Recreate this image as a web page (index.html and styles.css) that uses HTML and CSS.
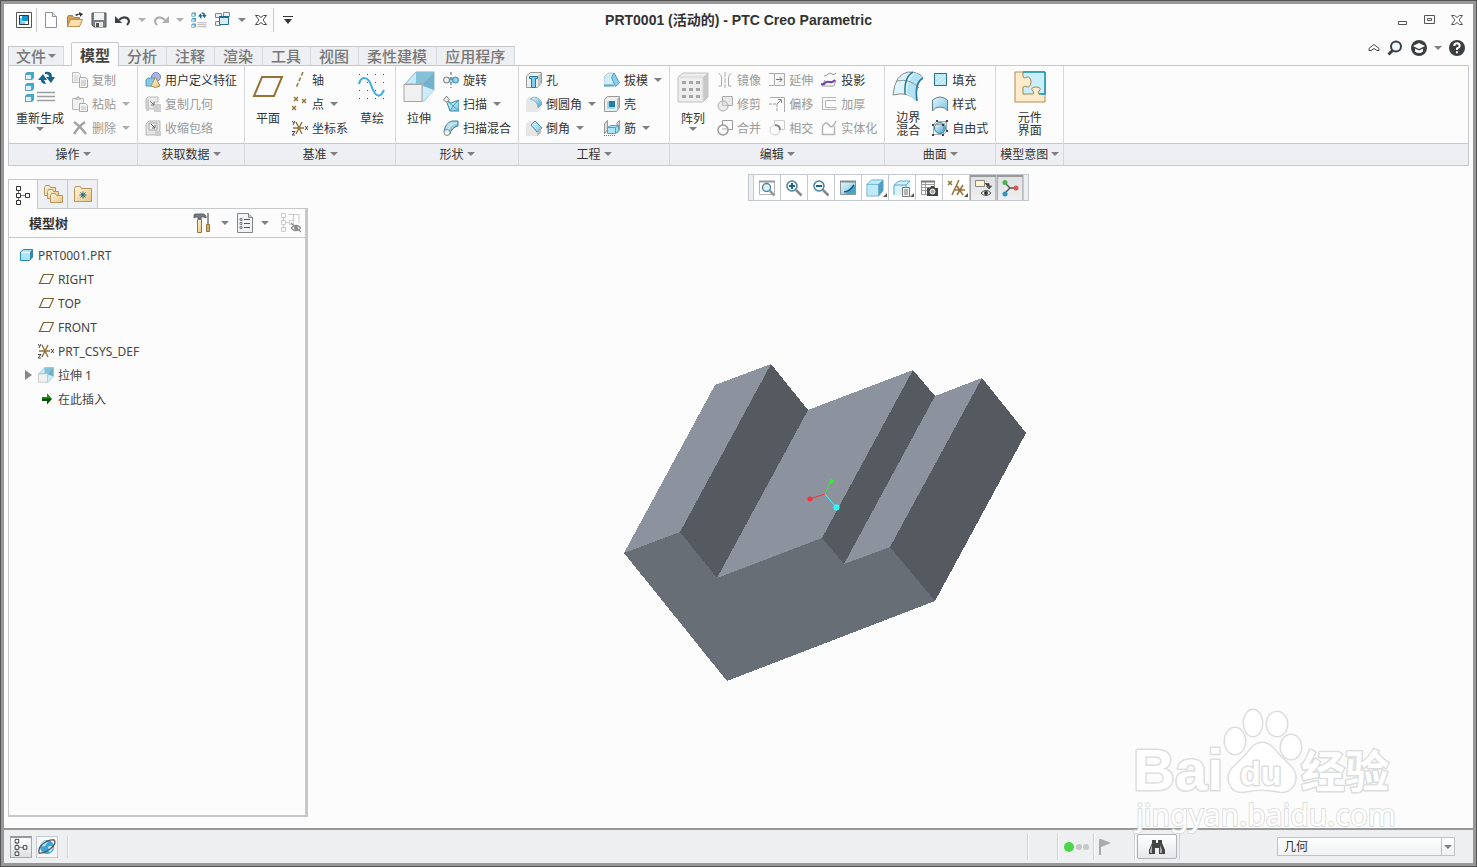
FILE: index.html
```html
<!DOCTYPE html>
<html lang="zh-CN">
<head>
    <meta charset="UTF-8">
    <meta name="viewport" content="width=device-width, initial-scale=1.0">
    <title>PRT0001 (活动的) - PTC Creo Parametric</title>
    <link rel="stylesheet" href="styles.css">
</head>
<body>
    <!-- Shared icons -->
    <svg class="defs" width="0" height="0" aria-hidden="true">
        <defs>
            <linearGradient id="blue" x1="0" y1="0" x2="1" y2="1">
                <stop offset="0" stop-color="#e4f6fd"/>
                <stop offset="1" stop-color="#7cc4e2"/>
            </linearGradient>
            <linearGradient id="tan" x1="0" y1="0" x2="1" y2="1">
                <stop offset="0" stop-color="#fff6df"/>
                <stop offset="1" stop-color="#e8c583"/>
            </linearGradient>
            <linearGradient id="sky" x1="0" y1="0" x2="1" y2="1">
                <stop offset="0" stop-color="#ffffff"/>
                <stop offset="1" stop-color="#3f9cc4"/>
            </linearGradient>
            <symbol id="csys" viewBox="0 0 16 16">
                <path d="M1 8h11M4 2l6 12M10 2L4 14" fill="none" stroke="#957238" stroke-width="1.4"/>
                <path d="M0 1l1.5 2M3 1L1 5M0 11.500h3L0 15h3M13 6l3 4M16 6l-3 4" fill="none" stroke="#444"/>
            </symbol>
            <symbol id="extrude" viewBox="0 0 32 32">
                <path d="M2 13L13 1h18L20 13z" fill="#c3ebf9" stroke="#8fb4c4"/>
                <path d="M13 1h18L20 13h-7z" fill="#85c0d9"/>
                <path d="M31 1v18L20 31V13z" fill="#74b0ca" stroke="#8fb4c4"/>
                <path d="M20 31l11-12-11-4z" fill="#c9eefa"/>
                <path d="M1 13.500h18v17H1z" fill="#f0f0f2" stroke="#a5a5a5"/>
            </symbol>
            <symbol id="tree" viewBox="0 0 16 20">
                <path d="M3.500 5v10M5 10.500h6" fill="none" stroke="#777"/>
                <path d="M1.500 1.500h4v4h-4zM1.500 8.500h4v4h-4zM1.500 15.500h4v4h-4zM10.500 8.500h4v4h-4z" fill="#fff" stroke="#333"/>
            </symbol>
            <symbol id="plane" viewBox="0 0 16 16">
                <path d="M5.500 3.500h10l-4 9h-10z" fill="none" stroke="#7d6232" stroke-width="1.200"/>
            </symbol>
            <symbol id="regen" viewBox="0 0 32 32">
                <path d="M1 3l2-2h7v6l-2 2H1zM1 14l2-2h7v6l-2 2H1zM1 25l2-2h7v6l-2 2H1z" fill="#3ea7cf"/>
                <path d="M1.500 3.500h6v5h-6zM1.500 14.500h6v5h-6zM1.500 25.500h6v5h-6z" fill="#d8f3fc" stroke="#5d8fa5" stroke-width=".7"/>
                <path d="M13 21.500h18M13 25.500h18M13 29.500h18" stroke="#9d9d9d" stroke-width="1.500"/>
                <path d="M14 9l5-6 4 6h-3l2 4q-5 0-5-4zM21 1q7-1 7 5h3l-4 6-5-6h3q0-3-4-3z" fill="#17658a"/>
            </symbol>
            <symbol id="cube" viewBox="0 0 20 20">
                <path d="M1 6l5-5h13v12l-5 6H1z" fill="#bdebfa"/>
                <path d="M14 6l5-5v12l-5 6z" fill="#4d9fc3"/>
                <path d="M1 6h13v13H1zM1 6l5-5h13l-5 5M19 1v12l-5 6" fill="none" stroke="#5b9dba" stroke-width=".8"/>
            </symbol>
        </defs>
    </svg>

    <div class="window">
        <header class="titlebar">
            <div class="quick">
                <button class="app" aria-label="窗口"><svg width="16" height="16"><path d="M.5.500h15v15H.5z" fill="#fff" stroke="#555"/><path d="M3.500 3.500h9v9h-9z" fill="#fff" stroke="#333"/><path d="M6 4h6v5H6z" fill="#1297d8"/><path d="M4 6h2v6H4zM4 10h5v2H4z" fill="#7cc8ea"/></svg></button>
                <span class="sep"></span>
                <button class="tool" aria-label="新建"><svg width="16" height="16"><path d="M2.500.500h7l4 4v11h-11z" fill="#fff" stroke="#8b9196"/><path d="M9.500.500v4h4" fill="#dde2e6" stroke="#8b9196"/></svg></button>
                <button class="tool" aria-label="打开"><svg width="16" height="16"><path d="M.5 14.500v-10l1-1h4l1 2h6v9z" fill="#d0a35c" stroke="#a8803f"/><path d="M.5 14.500l3-7h12l-3 7z" fill="#fbe0ac" stroke="#b78e4b"/><path d="M8 3q2-2 4-1V0l4 2-3 3V3q-2-1-3 1z" fill="#333"/></svg></button>
                <button class="tool" aria-label="保存"><svg width="16" height="16"><path d="M1 1h14v14H3l-2-2z" fill="#7b7f84" stroke="#555"/><path d="M3 1h10v7H3z" fill="#f1f3f4"/><path d="M4 10h8v5H4z" fill="#e7e7e7"/><path d="M5 11h3v4H5z" fill="#555"/></svg></button>
                <button class="tool" aria-label="撤消"><svg width="16" height="16"><path d="M4 8q4-4 8-2 4 3 0 7" fill="none" stroke="#3b4045" stroke-width="2.200"/><path d="M0 4v7h7z" fill="#3b4045"/></svg></button>
                <button class="drop" aria-label="撤消列表"><span class="arrow pale"></span></button>
                <button class="tool" aria-label="重做"><svg width="16" height="16"><path d="M12 8Q8 4 4 6q-4 3 0 7" fill="none" stroke="#adb0b2" stroke-width="2.200"/><path d="M16 4v7H9z" fill="#adb0b2"/></svg></button>
                <button class="drop" aria-label="重做列表"><span class="arrow pale"></span></button>
                <button class="tool" aria-label="重新生成"><svg width="16" height="16"><use href="#regen"/></svg></button>
                <button class="tool" aria-label="窗口切换"><svg width="16" height="16"><path d="M.5 1.500h6v4h-6zM8.500.500h6v4h-6zM.5 9.500h5v4h-5z" fill="#eee" stroke="#888"/><path d="M4.500 4.500h9v8h-9z" fill="#d4eefa" stroke="#246c91"/><path d="M4 5h10" stroke="#246c91" stroke-width="2"/></svg></button>
                <button class="drop" aria-label="窗口列表"><span class="arrow"></span></button>
                <button class="tool" aria-label="关闭"><svg width="12" height="12"><path d="M.5 1.500h3l2.500 2 2.500-2h3l-3.500 4.500 3.500 4.500h-3l-2.500-2-2.500 2h-3L4 6z" fill="#fff" stroke="#444"/></svg></button>
                <span class="sep"></span>
                <button class="tool" aria-label="自定义快速访问工具栏"><svg width="10" height="8"><path d="M0 .5h10" stroke="#333"/><path d="M1 3h8L5 8z" fill="#333"/></svg></button>
            </div>
            <h1>PRT0001 (活动的) - PTC Creo Parametric</h1>
            <div class="window-buttons">
                <button aria-label="最小化"><svg width="10" height="12"><path d="M.5 7.500h8v3h-8z" fill="#fff" stroke="#555"/></svg></button>
                <button aria-label="最大化"><svg width="12" height="10"><path d="M.5.500h10v8H.5zM3.500 3.500h4v2h-4z" fill="#fff" stroke="#555"/></svg></button>
                <button aria-label="关闭窗口"><svg width="12" height="12"><path d="M.5 1.500h3l2.500 2 2.500-2h3l-3.500 4.500 3.500 4.500h-3l-2.500-2-2.500 2h-3L4 6z" fill="#fff" stroke="#555"/></svg></button>
            </div>
        </header>

        <nav class="tab-row">
            <button class="tab file">文件<span class="arrow"></span></button>
            <button class="tab active">模型</button>
            <button class="tab">分析</button>
            <button class="tab">注释</button>
            <button class="tab">渲染</button>
            <button class="tab">工具</button>
            <button class="tab">视图</button>
            <button class="tab">柔性建模</button>
            <button class="tab">应用程序</button>
            <div class="help">
                <button class="collapse" aria-label="最小化功能区"><svg width="12" height="8"><path d="M1 4.500L6 .5l5 4v2H9L6 4.500l-3 2H1z" fill="#fff" stroke="#444"/></svg></button>
                <button class="tool" aria-label="搜索"><svg width="16" height="16"><circle cx="9" cy="6.500" r="5" fill="#eef7fc" stroke="#3c3f42" stroke-width="2"/><path d="M5.500 10.500L1.500 14.500" stroke="#3c3f42" stroke-width="3"/></svg></button>
                <button class="tool" aria-label="学习中心"><svg width="16" height="16"><circle cx="8" cy="8" r="8" fill="#3c3f42"/><path d="M2 6l6-3 6 3-6 3z" fill="#fff"/><path d="M4 8.500v3q4 3 8 0v-3L8 10.500z" fill="#fff"/></svg></button>
                <button class="drop" aria-label="学习列表"><span class="arrow"></span></button>
                <button class="tool" aria-label="帮助"><svg width="16" height="16"><circle cx="8" cy="8" r="8" fill="#3c3f42"/><path d="M5.300 6q0-2.700 2.700-2.700T10.700 6Q10.700 7.300 8 8.500V10M8 11.300v2" fill="none" stroke="#fff" stroke-width="2"/></svg></button>
            </div>
        </nav>

        <div class="ribbon">
            <section class="group">
                <div class="group-body">
                    <button class="big"><svg width="32" height="32"><use href="#regen"/></svg>重新生成<span class="arrow"></span></button>
                    <div class="col">
                        <button class="small" disabled><svg width="16" height="16"><path d="M.5.500h6l2 2v8h-8z" fill="#f3f3f3" stroke="#bbb"/><path d="M2 4h4M2 6h4M2 8h4" stroke="#ccc"/><path d="M7.500 5.500h6l2 2v8h-8z" fill="#f3f3f3" stroke="#aaa"/><path d="M9 9h5M9 11h5M9 13h5" stroke="#bbb"/></svg>复制</button>
                        <button class="small" disabled><svg width="16" height="16"><path d="M.5 2.500h11v11H.5z" fill="#f1f1f1" stroke="#bbb"/><path d="M3 3q0-1 2-1 1-3 2 0 2 0 2 1z" fill="#ddd" stroke="#aaa"/><path d="M7.500 7.500h6l2 2v6h-8z" fill="#f7f7f7" stroke="#aaa"/><path d="M9 11h5M9 13h5" stroke="#bbb"/></svg>粘贴<span class="arrow"></span></button>
                        <button class="small" disabled><svg width="16" height="16"><path d="M2 2q6 4 12 12M13 2Q7 6 2 14" fill="none" stroke="#a2a2a2" stroke-width="2.500"/></svg>删除<span class="arrow"></span></button>
                    </div>
                </div>
                <button class="group-label">操作<span class="arrow"></span></button>
            </section>

            <section class="group">
                <div class="group-body">
                    <div class="col">
                        <button class="small"><svg width="16" height="16"><circle cx="11" cy="5" r="4.500" fill="#a9b8e8" stroke="#7383bd"/><path d="M1 8l2-2h7v6l-2 2H1z" fill="#83cbe8" stroke="#4d9dbe"/><path d="M10.500 5L6 14q4 3 9 0z" fill="url(#tan)" stroke="#b38c4a"/></svg>用户定义特征</button>
                        <button class="small" disabled><svg width="16" height="16"><path d="M1 3l2-2h10v5H9v7H1z" fill="#e9e9e9" stroke="#bbb"/><path d="M9 8h7v8H9z" fill="#d0d0d0"/><path d="M1 3h3v12H1z" fill="#ccc"/><path d="M5 5l4 4M9 6v3H6" fill="none" stroke="#777"/></svg>复制几何</button>
                        <button class="small" disabled><svg width="16" height="16"><path d="M1 4l3-3h11v8l-2 6H1z" fill="#e2e2e2" stroke="#b5b5b5"/><path d="M4 3h8v7H4z" fill="#eee" stroke="#aaa"/><path d="M6 4l4 4M10 5v3H7" fill="none" stroke="#666"/><path d="M10 11h6v5h-6z" fill="#ccc"/></svg>收缩包络</button>
                    </div>
                </div>
                <button class="group-label">获取数据<span class="arrow"></span></button>
            </section>

            <section class="group">
                <div class="group-body">
                    <button class="big"><svg width="32" height="32"><path d="M10 6h20l-8 19H2z" fill="none" stroke="#957238" stroke-width="2"/></svg>平面</button>
                    <div class="col">
                        <button class="small"><svg width="16" height="16"><path d="M11 0L4 16" stroke="#957238" stroke-width="1.500" stroke-dasharray="4 2"/></svg>轴</button>
                        <button class="small"><svg width="16" height="16"><path d="M2 1l4 4M6 1L2 5M10 3l4 4M14 3l-4 4M0 10l4 4M4 10l-4 4" stroke="#957238" stroke-width="1.400"/></svg>点<span class="arrow"></span></button>
                        <button class="small"><svg width="16" height="16"><use href="#csys"/></svg>坐标系</button>
                    </div>
                    <button class="big"><svg width="32" height="32"><path d="M3 3.500h26M3 11.500h26M3 19.500h26M3 27.500h26" stroke="#555" stroke-dasharray="1 7"/><path d="M3 13C5 5 12 5 15 14s8 16 13 5" fill="none" stroke="#3aaee0" stroke-width="2"/></svg>草绘</button>
                </div>
                <button class="group-label">基准<span class="arrow"></span></button>
            </section>

            <section class="group">
                <div class="group-body">
                    <button class="big"><svg width="32" height="32"><use href="#extrude"/></svg>拉伸</button>
                    <div class="col">
                        <button class="small"><svg width="16" height="16"><path d="M3 5h10v6H3z" fill="#a4d9ed"/><circle cx="3.500" cy="8" r="3" fill="#eee" stroke="#777"/><circle cx="12.500" cy="8" r="3" fill="#8fd3ee" stroke="#3d83a2"/><path d="M8 0v16" stroke="#555" stroke-dasharray="3 2"/></svg>旋转</button>
                        <button class="small"><svg width="16" height="16"><path d="M3 4l5 3 8-3v11H7z" fill="url(#blue)" stroke="#3484a6"/><path d="M3 4l7 6 6-6M10 10l-3 5M10 10l6 5" fill="none" stroke="#4f9fbf"/><path d="M3.500 0l3 4-3 2-3-2z" fill="#eee" stroke="#888"/></svg>扫描<span class="arrow"></span></button>
                        <button class="small"><svg width="16" height="16"><path d="M1 12Q2 3 9 1h6v5q-7 2-8 8z" fill="url(#sky)" stroke="#3484a6"/><path d="M5 11Q6 4 14 3" fill="none" stroke="#e8f7fc"/><circle cx="4" cy="12.500" r="3" fill="#f4f4f4" stroke="#888"/></svg>扫描混合</button>
                    </div>
                </div>
                <button class="group-label">形状<span class="arrow"></span></button>
            </section>

            <section class="group">
                <div class="group-body">
                    <div class="col">
                        <button class="small"><svg width="16" height="16"><path d="M.5 4l4-3.500h11V11l-4 4.500H.5z" fill="#eee" stroke="#999"/><path d="M12 4l3-3v10l-3 4z" fill="#c1c5c7"/><path d="M3.500 4.500h8v2h-2v9h-4v-9h-2z" fill="#7bd0ee" stroke="#26789c"/></svg>孔</button>
                        <button class="small"><svg width="16" height="16"><path d="M0 4l3-3h6l6 7v5l-3 3H0z" fill="#e7e7e8"/><path d="M4 3l4-2q7 1 8 7l-4 4q0-7-8-9z" fill="url(#sky)" stroke="#5fa6c4" stroke-width=".7"/></svg>倒圆角<span class="arrow"></span></button>
                        <button class="small"><svg width="16" height="16"><path d="M0 4l3-3h6l6 7v5l-3 3H0z" fill="#e5e5e6"/><path d="M5 5l4-4 7 7-5 4z" fill="url(#blue)" stroke="#388bb0"/><path d="M11 12l4-4v5l-4 3z" fill="#bbb"/></svg>倒角<span class="arrow"></span></button>
                    </div>
                    <div class="col">
                        <button class="small"><svg width="16" height="16"><path d="M0 5l4-4h6v10l-5 3H0z" fill="#d1ecf6" stroke="#8bb7c9" stroke-width=".6"/><path d="M10 1l5.500 10-4 3.500-4-9z" fill="#8ccfe8" stroke="#4a9bbc"/><path d="M0 13.500h10" stroke="#5aa7c6" stroke-width="2"/></svg>拔模<span class="arrow"></span></button>
                        <button class="small"><svg width="16" height="16"><path d="M.5 3.500l3-3h12v11l-3 4H.5z" fill="#eee" stroke="#999"/><path d="M13 3l2-2v11l-2 3z" fill="#b9b9b9"/><path d="M3 5h8v8H3z" fill="#9bd9ee"/><path d="M5 5h6v6H5z" fill="#277ca2"/></svg>壳</button>
                        <button class="small"><svg width="16" height="16"><path d="M.5 4l3-3.500v9L.5 14zM13 3l2.500-2.500V10L13 13z" fill="#ddd" stroke="#999"/><path d="M3.500 7.500l3-2h8v5l-3 3h-8z" fill="#a9e3f5" stroke="#4ea3c2"/><path d="M3.500 7.500h8v6M11.500 7.500l3-2" fill="none" stroke="#4ea3c2"/><path d="M0 15.500h12" stroke="#777" stroke-dasharray="1 1"/></svg>筋<span class="arrow"></span></button>
                    </div>
                </div>
                <button class="group-label">工程<span class="arrow"></span></button>
            </section>

            <section class="group">
                <div class="group-body">
                    <button class="big"><svg width="32" height="32"><path d="M1 6l5-4h25v24l-5 5H1z" fill="#ededee" stroke="#c1c1c1"/><path d="M26 6l5-4v24l-5 5z" fill="#c8c8c8"/><path d="M1 6h25v25" fill="none" stroke="#d4d4d4"/><path d="M5 11.500h18M5 18.500h18M5 25.500h18" stroke="#a5a5a5" stroke-width="3" stroke-dasharray="4 3"/></svg>阵列<span class="arrow"></span></button>
                    <div class="col">
                        <button class="small" disabled><svg width="16" height="16"><path d="M1.500 1q3 2 3 5v8h-3M14.500 1q-3 2-3 5v8h3" fill="none" stroke="#aaa"/><path d="M8 0v16" stroke="#aaa" stroke-dasharray="5 1"/></svg>镜像</button>
                        <button class="small" disabled><svg width="16" height="16"><path d="M5.500.500h10v9h-10z" fill="#e8e8e8" stroke="#aaa"/><circle cx="6" cy="10" r="5" fill="#ddd" fill-opacity=".5" stroke="#aaa"/></svg>修剪</button>
                        <button class="small" disabled><svg width="16" height="16"><path d="M5.500 5V.500h10v9H11" fill="none" stroke="#999"/><circle cx="6" cy="10" r="5" fill="none" stroke="#999" stroke-width="1.500"/><path d="M5 9h6" stroke="#aaa"/></svg>合并</button>
                    </div>
                    <div class="col">
                        <button class="small" disabled><svg width="16" height="16"><path d="M0 1.500h5M0 13.500h5" stroke="#aaa"/><path d="M5.500 1.500h10v12h-10z" fill="#f5f5f5" stroke="#aaa"/><path d="M7 7.500h6M10.500 5l2.500 2.500-2.500 2.500" fill="none" stroke="#777"/></svg>延伸</button>
                        <button class="small" disabled><svg width="16" height="16"><path d="M1 1.500h14.500V16" fill="none" stroke="#aaa"/><path d="M0 8h8v8" fill="none" stroke="#999" stroke-dasharray="3 1"/><path d="M8 8l4-4M9 3.500h3.500V7" fill="none" stroke="#888"/></svg>偏移</button>
                        <button class="small" disabled><svg width="16" height="16"><path d="M5.500 4V.500h10v9H12" fill="none" stroke="#ccc"/><circle cx="6" cy="10" r="5" fill="none" stroke="#ccc"/><path d="M6 5q5 0 5 5" fill="none" stroke="#888" stroke-width="2"/></svg>相交</button>
                    </div>
                    <div class="col">
                        <button class="small"><svg width="16" height="16"><path d="M3 4q3 0 4-2 2-2 4 0 2 2 4-1" fill="none" stroke="#999"/><path d="M4 8l-3 6h12l2-6" fill="none" stroke="#999"/><path d="M0 12q3 1 4-1t5-1q2 1 5-2" fill="none" stroke="#7240ad" stroke-width="2"/></svg>投影</button>
                        <button class="small" disabled><svg width="16" height="16"><path d="M15 1.500H1.500v12H15v-2H4.500v-7H15" fill="none" stroke="#b4b4b4"/></svg>加厚</button>
                        <button class="small" disabled><svg width="16" height="16"><path d="M1 7q4-7 7-2 3 5 7-4M1.500 6v8.500h12V6" fill="none" stroke="#b4b4b4" stroke-width="1.500"/></svg>实体化</button>
                    </div>
                </div>
                <button class="group-label">编辑<span class="arrow"></span></button>
            </section>

            <section class="group">
                <div class="group-body">
                    <button class="big two-line"><svg width="32" height="32"><path d="M1 24Q3 3 16 1q12 0 15 6-8 5-6 23Q16 20 1 24z" fill="#def4fc" stroke="#888"/><path d="M31 7q-9 5-6 23-3-3-10-6 0-17 9-22z" fill="#b2e2f4"/><path d="M5 10q13-3 22 7" fill="none" stroke="#8a969c"/><path d="M31 7q-9 5-6 23M13 23Q12 6 21 1" fill="none" stroke="#277ba0" stroke-width="1.500"/></svg>边界<br>混合</button>
                    <div class="col">
                        <button class="small"><svg width="16" height="16"><path d="M2.500 1.500h12v12h-12z" fill="#b7e7f8" stroke="#2b6f8e"/><path d="M4 7l4-4M4 12l9-9M9 12l4-4" stroke="#e6f7fd"/></svg>填充</button>
                        <button class="small"><svg width="16" height="16"><path d="M.5 4Q8-2 15.500 4v11q-2-4-7.500-4t-7.500 4z" fill="url(#blue)" stroke="#66808b"/></svg>样式</button>
                        <button class="small"><svg width="16" height="16"><circle cx="8" cy="8" r="5.500" fill="url(#sky)" stroke="#2b83aa"/><path d="M1.500 4.500l3-3h10v10l-3 3h-10zM1.500 4.500h10v10M11.500 4.500l3-3" fill="none" stroke="#888" stroke-width=".7"/><path d="M0 4h2v2H0zM10 4h2v2h-2zM0 14h2v2H0zM10 14h2v2h-2zM14 0h2v2h-2zM4 0h2v2H4zM14 10h2v2h-2z" fill="#444"/></svg>自由式</button>
                    </div>
                </div>
                <button class="group-label">曲面<span class="arrow"></span></button>
            </section>

            <section class="group">
                <div class="group-body center">
                    <button class="big two-line"><svg width="32" height="32"><path d="M1 1h30v30H1z" fill="#fdebcb" stroke="#b08d4f"/><path d="M9 1h22v22h-6q-2-2 1-4 1-3-4-3t-4 3q3 2 1 4H9v-7q2-2 4 0 4 0 4-5t-4-5q-2 2-4 0z" fill="#c9effc" stroke="#a08550"/><path d="M31 1v22h-6M9 1h22" fill="none" stroke="#1e9bc5" stroke-width="1.500"/></svg>元件<br>界面</button>
                </div>
                <button class="group-label">模型意图<span class="arrow"></span></button>
            </section>

            <div class="group filler">
                <div class="group-body"></div>
                <div class="group-label"></div>
            </div>
        </div>

        <main class="workspace">
            <aside class="navigator">
                <div class="nav-tabs">
                    <button class="nav-tab active" aria-label="模型树"><svg width="16" height="20"><use href="#tree"/></svg></button>
                    <button class="nav-tab" aria-label="文件夹浏览器"><svg width="20" height="20"><g fill="url(#tan)" stroke="#b8965c"><path d="M1.500 11.500v-8l1-2h4l1 2h5v8z"/><path d="M4.500 14.500v-7l1-2h4l1 2h5v7z"/><path d="M7.500 18.500v-7l1-2h4l1 2h6v7z"/></g></svg></button>
                    <button class="nav-tab" aria-label="收藏夹"><svg width="18" height="16"><path d="M.5 15.500v-13l1-2h5l1 2h10v13z" fill="url(#tan)" stroke="#b8965c"/><path d="M9 5.500v7M5.500 9h7M6.500 6.500l5 5M11.500 6.500l-5 5" stroke="#16647f"/></svg></button>
                </div>
                <div class="panel">
                    <div class="panel-head">
                        <h2>模型树</h2>
                        <button aria-label="设置"><svg width="20" height="20"><path d="M2 1h9l2 2v2l-2-1H8v2H5V4H3L1 5V2z" fill="#777b85" stroke="#4f535b" stroke-width=".8"/><path d="M4.500 6.500h4v13h-4z" fill="url(#tan)" stroke="#98753a"/><path d="M15 0v11" stroke="#777" stroke-width="1.500"/><path d="M13.500 11.500h3v7h-3z" fill="#d5ac65" stroke="#98753a"/></svg></button>
                        <button class="drop" aria-label="设置列表"><span class="arrow"></span></button>
                        <button aria-label="显示"><svg width="16" height="20"><path d="M.5.500h11l4 4v15H.5z" fill="#f0f4f7" stroke="#84888d"/><path d="M11.500.500v4h4" fill="#ccc" stroke="#84888d"/><path d="M7 6.500h6M7 10.500h6M7 14.500h6" stroke="#555"/><path d="M3 5.500h2v2H3zM3 9.500h2v2H3zM3 13.500h2v2H3z" fill="none" stroke="#555" stroke-width=".7"/></svg></button>
                        <button class="drop" aria-label="显示列表"><span class="arrow"></span></button>
                        <button class="hide-columns" aria-label="隐藏树列" disabled><svg width="20" height="20"><path d="M.5.500h4v4h-4zM.5 7.500h4v4h-4zM.5 14.500h4v4h-4zM8.500 7.500h4v4h-4zM2.500 4v4M2.500 11v4M5 9.500h3M7 1.500h11v9M12.500 2v5" fill="none" stroke="#ccc"/><path d="M10 15q5-5 10 0-5 5-10 0M10 10l10 9" fill="none" stroke="#888" stroke-width="1.200"/><circle cx="15" cy="15" r="2" fill="#888"/></svg></button>
                    </div>
                    <ul class="tree">
                        <li>
                            <div class="node root"><svg width="16" height="16"><path d="M2.500 5l3-2.500h9V10l-3 3.500h-9z" fill="#a6e6fb" stroke="#2684aa"/><path d="M12 5l2.500-2.500V10L12 13z" fill="#3089ae"/><path d="M3 5.500h8.500" stroke="#fff"/></svg>PRT0001.PRT</div>
                            <ul>
                                <li class="node"><span class="toggle"></span><svg width="16" height="16"><use href="#plane"/></svg>RIGHT</li>
                                <li class="node"><span class="toggle"></span><svg width="16" height="16"><use href="#plane"/></svg>TOP</li>
                                <li class="node"><span class="toggle"></span><svg width="16" height="16"><use href="#plane"/></svg>FRONT</li>
                                <li class="node"><span class="toggle"></span><svg width="16" height="16"><use href="#csys"/></svg>PRT_CSYS_DEF</li>
                                <li class="node"><button class="toggle" aria-label="展开"><svg width="8" height="10"><path d="M1 0l7 5-7 5z" fill="#888"/></svg></button><svg width="16" height="16"><use href="#extrude"/></svg>拉伸 1</li>
                                <li class="node"><span class="toggle"></span><svg width="16" height="16"><path d="M4 6h5V2.500l5 5.500-5 5.500V10H4z" fill="#0d4d0a"/><path d="M4 6h5V3l4 4.500H4z" fill="#159a0c"/></svg>在此插入</li>
                            </ul>
                        </li>
                    </ul>
                </div>
            </aside>

            <div class="canvas">
                <div class="view-bar">
                    <button aria-label="重新调整"><svg width="18" height="18"><path d="M1.500 2.500h15v13h-15z" fill="#fff" stroke="#b5b5b5"/><path d="M1 2.500h16" stroke="#999" stroke-width="2"/><circle cx="8.500" cy="8.500" r="4" fill="#e0f3fa" stroke="#4b86a0" stroke-width="1.400"/><path d="M11.500 11.500l5 5" stroke="#999" stroke-width="2.500"/></svg></button>
                    <button aria-label="放大"><svg width="18" height="18"><circle cx="7" cy="7" r="5" fill="#f5fbfe" stroke="#4d7f96" stroke-width="1.500"/><path d="M4 7h6M7 4v6" stroke="#17658a" stroke-width="2"/><path d="M11 11l5.500 5.500" stroke="#888" stroke-width="2.500"/></svg></button>
                    <button aria-label="缩小"><svg width="18" height="18"><circle cx="7" cy="7" r="5" fill="#f5fbfe" stroke="#4d7f96" stroke-width="1.500"/><path d="M4 7h6" stroke="#17658a" stroke-width="2"/><path d="M11 11l5.500 5.500" stroke="#888" stroke-width="2.500"/></svg></button>
                    <button aria-label="重画"><svg width="18" height="18"><path d="M1.500 2.500h15v13h-15z" fill="url(#blue)" stroke="#85949b"/><path d="M16 6v9H6z" fill="#4ba6c9"/><path d="M1 2.500h16" stroke="#888" stroke-width="2"/><path d="M5 13q5 0 10-7" fill="none" stroke="#175b78" stroke-width="1.500"/></svg></button>
                    <button class="more" aria-label="显示样式"><svg width="18" height="18"><use href="#cube"/></svg></button>
                    <button class="more" aria-label="已命名视图"><svg width="18" height="18"><path d="M1 6l5-4h11v10l-4 4H1z" fill="#d6f2fb"/><path d="M1 6h12v9M1 6l5-4h11l-4 4M1 6v10" fill="none" stroke="#5ca6c7"/><path d="M9.500 8.500h7v9h-7z" fill="#f5f5f5" stroke="#777"/><path d="M11 11h4M11 13h4M11 15h4" stroke="#777"/></svg></button>
                    <button aria-label="视图管理器"><svg width="18" height="18"><path d="M1.500 2.500h13v13h-13zM1 5.500h14M1 8.500h14M1 11.500h14M5.500 3v12" fill="none" stroke="#999"/><path d="M1 2.500h14" stroke="#777" stroke-width="2"/><path d="M7 9h3l1-2h3l1 2h3v8H7z" fill="#444"/><circle cx="12.500" cy="12.500" r="2.500" fill="#aaa" stroke="#fff"/></svg></button>
                    <button class="more" aria-label="基准显示过滤器"><svg width="18" height="18"><path d="M1 2l4 4M5 2L1 6M12 1L5 16M8 11h10M10 7l6 9M16 6l-6 10" fill="none" stroke="#957238" stroke-width="1.500"/></svg></button>
                    <button class="pressed" aria-label="注释显示"><svg width="18" height="18"><path d="M1.500 1.500h9v6h-9z" fill="#fff3cd" stroke="#888"/><path d="M11 4.500h4V9M12.500 7l2.500 3 2.500-3z" fill="#333" stroke="#555"/><path d="M7 14q5-5 10 0-5 5-10 0z" fill="#fff" stroke="#444"/><circle cx="12" cy="14" r="2" fill="#333"/></svg></button>
                    <button class="pressed" aria-label="旋转中心"><svg width="18" height="18"><path d="M4 4l5 5M9 9h6M9 9l-5 5" stroke="#555" stroke-width="1.400"/><circle cx="4" cy="3.500" r="2.500" fill="#45b34c"/><circle cx="15" cy="9" r="2.500" fill="#df5555"/><circle cx="4" cy="15" r="2.500" fill="#3194c0"/></svg></button>
                </div>

                <svg class="model" viewBox="624 364 402 317" width="402" height="317">
                    <g shape-rendering="crispEdges">
                        <path d="M624 553l56-21 37 46 105-40 22 26 46-17 45 54-208 80z" fill="#676e76"/>
                        <path d="M624 553l91-168 56-21-91 168zM717 578l91-168 105-40-91 168zM844 564l91-168 47-18-92 169z" fill="#8c939f"/>
                        <path d="M771 364l37 46-91 168-37-46zM913 370l22 26-91 168-22-26zM982 378l44 55-91 168-45-54z" fill="#555960"/>
                    </g>
                    <path d="M825 494l-15 5" stroke="#ff3030"/>
                    <path d="M825 494l6-13" stroke="#30f030"/>
                    <path d="M825 494l11 13" stroke="#30ffff"/>
                    <circle cx="810" cy="499" r="2.500" fill="#ff3030"/>
                    <circle cx="831.500" cy="481.500" r="2.200" fill="#30f030"/>
                    <circle cx="836.500" cy="507.500" r="3" fill="#30ffff"/>
                </svg>
            </div>
        </main>

        <footer class="status">
            <button class="status-button pressed" aria-label="显示导航器"><svg width="16" height="18"><use href="#tree"/></svg></button>
            <button class="status-button" aria-label="显示浏览器"><svg width="18" height="18"><circle cx="9" cy="9" r="7" fill="#3ba5d6"/><path d="M4 4q4-3 6 0-2 2-3 4-3 1-5-1zM10 9q4-3 5 1-2 5-4 4z" fill="#c1e9f7"/><path d="M1 15Q0 9 6 5t10-3q3 4-4 9-7 5-11 4z" fill="none" stroke="#555" stroke-width="1.300"/></svg></button>
            <span class="line"></span>
            <div class="messages"></div>
            <span class="cell"></span>
            <span class="cell lights"><svg width="28" height="12"><circle cx="6" cy="6" r="5" fill="#4bd648"/><circle cx="16" cy="6" r="3" fill="#c5c7c9"/><circle cx="23" cy="6" r="3" fill="#c5c7c9"/></svg></span>
            <span class="cell flag"><svg width="14" height="16"><path d="M1 0v16" stroke="#aaa" stroke-width="2"/><path d="M2 0l10 4-10 4z" fill="#a9abad"/></svg></span>
            <span class="cell find">
                <button aria-label="查找"><svg width="18" height="16"><path d="M4 1h4v3h2V1h4v3l3 7v4h-6V9H7v6H1v-4l3-7z" fill="#444"/><path d="M4 6l-2 5v3h2zM12 6l2 5v3h-2z" fill="#aaa"/></svg></button>
            </span>
            <div class="filter">
                <select aria-label="选择过滤器"><option>几何</option></select>
                <span class="filter-arrow"><span class="arrow"></span></span>
            </div>
        </footer>

        <svg class="watermark" width="270" height="130" aria-label="Baidu 经验">
            <g fill="#fff" stroke="#dcdddd" stroke-width="3" paint-order="stroke" stroke-linejoin="round">
                <text x="2" y="84" class="wm-latin">Bai</text>
                <ellipse cx="104" cy="35" rx="10" ry="13"/>
                <ellipse cx="122" cy="17" rx="9" ry="13"/>
                <ellipse cx="146" cy="18" rx="10" ry="12"/>
                <ellipse cx="160" cy="41" rx="10" ry="12"/>
                <path d="M131 37q8 0 15 10l13 13q8 8 4 18-6 10-17 7-15-3-30 0-13 3-17-7-4-10 5-18l13-13q6-10 14-10z"/>
                <text x="109" y="79" class="wm-du">du</text>
                <text x="170" y="82" class="wm-cn">经验</text>
                <text x="5" y="120" class="wm-url">jingyan.baidu.com</text>
            </g>
        </svg>
    </div>
</body>
</html>
```
FILE: styles.css
```css
* {
    box-sizing: border-box;
}
body {
    margin: 0;
    padding: 1px;
    height: 100vh;
    background: #555;
    font-family: "Noto Sans", "Noto Sans CJK SC", sans-serif;
    font-size: 12px;
    color: #333;
}
button {
    display: flex;
    align-items: center;
    justify-content: center;
    padding: 0;
    border: none;
    background: none;
    font: inherit;
    color: inherit;
    white-space: nowrap;
}
svg {
    flex: none;
}
.defs {
    position: absolute;
}
.window {
    position: relative;
    display: flex;
    flex-direction: column;
    height: 100%;
    border: 3px solid #999797;
    background: #fcfcfc;
}
.arrow {
    flex: none;
    border: 4px solid transparent;
    border-top-color: #808080;
    border-bottom: none;
}
.arrow.pale, button:disabled .arrow {
    border-top-color: #b0b0b0;
}

/* Title bar */
.titlebar {
    display: grid;
    grid-template-columns: 1fr auto 1fr;
    align-items: center;
    height: 32px;
}
.titlebar h1 {
    margin: 0;
    font-family: "Liberation Sans", "Noto Sans CJK SC", sans-serif;
    font-size: 14px;
    font-weight: bold;
    line-height: 16px;
}
.quick {
    display: flex;
    align-items: center;
    padding-left: 12px;
}
.sep {
    width: 1px;
    height: 24px;
    margin-right: 2px;
    background: #c8cacc;
}
.app {
    margin-right: 4px;
}
.tool {
    width: 24px;
    height: 24px;
}
.drop {
    width: 14px;
    height: 24px;
}
.window-buttons {
    display: flex;
    justify-content: flex-end;
    padding-right: 3px;
}
.window-buttons button {
    width: 27px;
    height: 24px;
}

/* Tabs */
.tab-row {
    display: flex;
    align-items: flex-end;
    height: 29px;
    padding: 0 4px;
}
.tab {
    height: 19px;
    padding: 0 9px 0 8px;
    border-top: 1px solid #c5c8cc;
    border-right: 1px solid #d5d8db;
    background: #eeeff2;
    font-size: 15px;
    font-weight: 500;
    line-height: 16px;
    color: #777;
}
.tab.file {
    gap: 2px;
    margin-right: 7px;
    padding: 0 7px;
    border-left: 1px solid #c5c8cc;
}
.tab.active {
    position: relative;
    height: 24px;
    margin-bottom: -1px;
    padding: 0 8px;
    border: 1px solid #c5c8cc;
    border-bottom: none;
    border-radius: 2px 2px 0 0;
    background: #fcfcfc;
    font-weight: bold;
    color: #444;
}
.help {
    display: flex;
    align-self: flex-start;
    margin-left: auto;
}
.collapse {
    width: 18px;
    height: 24px;
}

/* Ribbon */
.ribbon {
    display: flex;
    margin: 0 4px;
    border: 1px solid #c5c8cc;
}
.group {
    display: flex;
    flex-direction: column;
    border-right: 1px solid #d5d8db;
}
.group.filler {
    flex: 1;
    border-right: none;
}
.group-body {
    display: flex;
    gap: 8px;
    height: 77px;
    padding: 2px 7px 0;
}
.group-body.center {
    justify-content: center;
}
.group-label {
    gap: 3px;
    height: 22px;
    padding: 0 4px 2px;
    border-top: 1px solid #c5c8cc;
    background: #eeeff2;
}
.col {
    display: flex;
    flex-direction: column;
}
.small {
    justify-content: flex-start;
    gap: 4px;
    height: 24px;
}
.small .arrow {
    margin-left: 2px;
}
.small:disabled {
    color: #999;
}
.big {
    flex-direction: column;
    justify-content: flex-start;
    min-width: 32px;
    padding-top: 3px;
    line-height: 16px;
}
.big svg {
    margin-bottom: 8px;
}
.big.two-line {
    line-height: 13px;
}

/* Workspace */
.workspace {
    display: flex;
    flex: 1;
    min-height: 0;
}
.navigator {
    display: flex;
    flex-direction: column;
    width: 304px;
    padding: 13px 0 11px 4px;
}
.nav-tabs {
    display: flex;
}
.nav-tab {
    width: 30px;
    height: 29px;
    border: 1px solid #c5c8cc;
    border-width: 1px 1px 0 0;
    background: #eeeff2;
}
.nav-tab.active {
    position: relative;
    height: 30px;
    margin-bottom: -1px;
    border-left-width: 1px;
    background: #fcfcfc;
}
.panel {
    flex: 1;
    border: 1px solid #c5c9cc;
    border-right-width: 3px;
    border-bottom-width: 2px;
}
.panel-head {
    display: flex;
    align-items: center;
    height: 29px;
    padding: 0 4px 0 20px;
    border-bottom: 1px solid #c5c8cc;
}
.panel-head h2 {
    flex: 1;
    margin: 0;
    font-size: 13px;
    font-weight: bold;
    line-height: 16px;
}
.panel-head .drop {
    width: 24px;
}
.panel-head .hide-columns {
    margin-left: 4px;
}
.tree, .tree ul {
    margin: 0;
    padding: 0;
    list-style: none;
}
.tree {
    padding-top: 5px;
    color: #444;
}
.tree ul {
    padding-left: 15px;
}
.node {
    display: flex;
    align-items: center;
    height: 24px;
}
.node > svg {
    margin-right: 4px;
}
.node.root {
    padding-left: 9px;
}
.toggle {
    width: 14px;
    justify-content: flex-start;
}
.canvas {
    position: relative;
    flex: 1;
    display: flex;
    align-items: flex-start;
    justify-content: center;
    margin-right: 4px;
    padding-top: 8px;
}
.view-bar {
    display: flex;
    padding: 0 4px;
    border: 1px solid #c5c8cc;
    background: #eeeff2;
}
.view-bar button {
    position: relative;
    width: 27px;
    height: 25px;
    border-left: 1px solid #c5c8cc;
    background: #fff;
}
.view-bar button:last-child {
    width: 28px;
    border-right: 1px solid #c5c8cc;
}
.view-bar .more::after {
    content: "";
    position: absolute;
    right: 1px;
    bottom: 3px;
    border: 2px solid #555;
    border-top-color: transparent;
    border-left-color: transparent;
}
.view-bar .pressed {
    background: linear-gradient(#dddfe2, #eeeff1);
    box-shadow: inset 0 2px 0 #999, inset 1px 0 0 #aaa, inset -1px 0 0 #bbb;
}
.model {
    position: absolute;
    left: 316px;
    top: 198px;
}

/* Status bar */
.status {
    display: flex;
    align-items: center;
    height: 35px;
    padding: 0 18px 0 6px;
    border-top: 2px solid #999797;
    background: #eeeff1;
}
.status-button {
    width: 22px;
    height: 22px;
    margin-right: 4px;
    border: 1px solid #c5c8cc;
    background: #f8f8f9;
}
.status-button.pressed {
    border: 1px solid #aaa;
    border-top: 2px solid #999;
    background: linear-gradient(#fff, #dddfe2);
}
.line {
    width: 1px;
    height: 22px;
    margin-left: 5px;
    background: #cfd1d3;
    box-shadow: 1px 0 0 #fff;
}
.messages {
    flex: 1;
}
.cell {
    display: flex;
    align-items: center;
    min-width: 30px;
    height: 27px;
    padding: 0 4px;
    border-left: 1px solid #cfd1d3;
    box-shadow: inset 1px 0 0 #fff;
}
.cell.lights {
    padding: 0 2px 0 5px;
}
.cell.flag {
    width: 41px;
    padding-left: 5px;
}
.cell.find {
    padding: 0 2px;
    border-right: 1px solid #cfd1d3;
}
.find button {
    width: 40px;
    height: 25px;
    border: 1px solid #b0b3b6;
    border-radius: 2px;
    background: linear-gradient(#fff, #e6e7e9);
}
.filter {
    position: relative;
    width: 178px;
    margin-left: 97px;
}
.filter select {
    display: block;
    width: 100%;
    height: 19px;
    padding: 0 6px;
    appearance: none;
    border: 1px solid #c0c3c6;
    border-radius: 0;
    background: linear-gradient(#fff, #f0f1f2);
    font: inherit;
    line-height: 17px;
    color: #333;
}
.filter-arrow {
    position: absolute;
    top: 1px;
    right: 1px;
    bottom: 1px;
    display: flex;
    align-items: center;
    padding: 0 2px;
    border-left: 1px solid #c0c3c6;
    pointer-events: none;
}

/* Logo over the lower right corner */
.watermark {
    position: absolute;
    right: 72px;
    bottom: 27px;
    pointer-events: none;
}
.wm-latin {
    font: bold 58px "Liberation Sans", sans-serif;
}
.wm-du {
    font: bold 34px "Liberation Sans", sans-serif;
}
.wm-cn {
    font: bold 44px "Noto Sans CJK SC", sans-serif;
}
.wm-url {
    font: 30px "Noto Sans", sans-serif;
    stroke-width: 2px;
}
```
